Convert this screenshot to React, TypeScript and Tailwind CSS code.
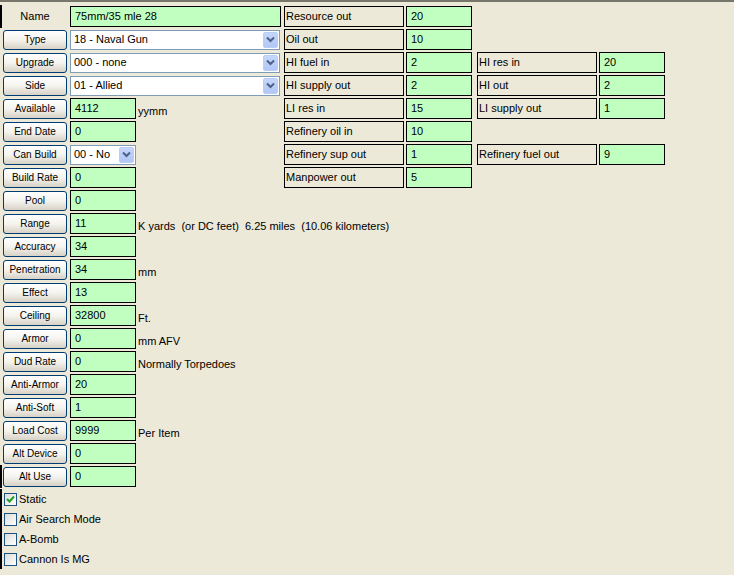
import React from "react";

const FONT = "font-['Tahoma','Liberation_Sans','DejaVu_Sans',sans-serif]";

interface FieldRow {
  label: string;
  value?: string;
  options?: string;
  unit?: string;
  small?: boolean;
  edge?: boolean;
}

const rows: FieldRow[] = [
  { label: "Type", options: "18 - Naval Gun" },
  { label: "Upgrade", options: "000 - none" },
  { label: "Side", options: "01 - Allied" },
  { label: "Available", value: "4112", unit: "yymm" },
  { label: "End Date", value: "0" },
  { label: "Can Build", options: "00 - No", small: true },
  { label: "Build Rate", value: "0" },
  { label: "Pool", value: "0" },
  { label: "Range", value: "11", unit: "K yards  (or DC feet)  6.25 miles  (10.06 kilometers)" },
  { label: "Accuracy", value: "34" },
  { label: "Penetration", value: "34", unit: "mm" },
  { label: "Effect", value: "13" },
  { label: "Ceiling", value: "32800", unit: "Ft." },
  { label: "Armor", value: "0", unit: "mm AFV" },
  { label: "Dud Rate", value: "0", unit: "Normally Torpedoes" },
  { label: "Anti-Armor", value: "20" },
  { label: "Anti-Soft", value: "1" },
  { label: "Load Cost", value: "9999", unit: "Per Item" },
  { label: "Alt Device", value: "0" },
  { label: "Alt Use", value: "0", edge: true },
];

const outputs: [string, string, string?, string?][] = [
  ["Resource out", "20"],
  ["Oil out", "10"],
  ["HI fuel in", "2", "HI res in", "20"],
  ["HI supply out", "2", "HI out", "2"],
  ["LI res in", "15", "LI supply out", "1"],
  ["Refinery oil in", "10"],
  ["Refinery sup out", "1", "Refinery fuel out", "9"],
  ["Manpower out", "5"],
];

const flags = [
  { label: "Static", checked: true },
  { label: "Air Search Mode", checked: false },
  { label: "A-Bomb", checked: false },
  { label: "Cannon Is MG", checked: false },
];

const XpButton = ({ label }: { label: string }) => (
  <button className="shrink-0 w-[64px] h-[20px] rounded-[3px] border border-[#003C74] bg-gradient-to-b from-white via-[#F4F3EE] to-[#D8D2C6] text-[10px] text-black leading-none">
    {label}
  </button>
);

const Chevron = () => (
  <svg width="9" height="7" viewBox="0 0 9 7">
    <path d="M1 1.5 L4.5 5 L8 1.5" fill="none" stroke="#4D6185" strokeWidth="2" />
  </svg>
);

const XpSelect = ({ text, small }: { text: string; small?: boolean }) => (
  <div className={`${small ? "w-[66px]" : "w-[210px]"} shrink-0 h-[20px] border border-[#7F9DB9] bg-white flex items-center justify-between pl-[3px] pr-[1px]`}>
    <span className="text-[11px] text-black">{text}</span>
    <div className="w-[15px] h-[16px] rounded-[2px] bg-gradient-to-b from-[#C6D6FC] to-[#B1C7F6] border border-[#B9CDF7] flex items-center justify-center">
      <Chevron />
    </div>
  </div>
);

const GreenBox = ({ value, wide }: { value: string; wide?: boolean }) => (
  <div className={`${wide ? "w-[211px]" : "w-[66px]"} shrink-0 h-[21px] border border-black bg-[#C0FFC0] px-[4px] pt-[3px] text-[11px] leading-[13px] text-black`}>
    {value}
  </div>
);

const Checkbox = ({ checked }: { checked: boolean }) => (
  <div className="shrink-0 w-[13px] h-[13px] border border-[#1C5180] bg-gradient-to-br from-[#DCDCD7] to-white flex items-center justify-center">
    {checked && (
      <svg width="9" height="9" viewBox="0 0 9 9">
        <path d="M1 4 L3.5 6.5 L8 1.5" fill="none" stroke="#21A121" strokeWidth="2" />
      </svg>
    )}
  </div>
);

export default function App() {
  return (
    <div className={`${FONT} w-[734px] min-h-[575px] bg-[#ECE9D8] border-t-2 border-[#77766B] flex text-black`}>
      <div className="w-[284px] shrink-0 pt-[3px] flex flex-col">
        <div className="h-[23px] flex items-center border-l-2 border-black pl-[1px] gap-[3px]">
          <div className="w-[64px] shrink-0 text-center text-[11px]">Name</div>
          <GreenBox value="75mm/35 mle 28" wide />
        </div>
        {rows.map((r) => (
          <div
            key={r.label}
            className={`h-[23px] flex items-center gap-[3px] ${r.edge ? "border-l-2 border-black pl-[1px]" : "pl-[3px]"}`}
          >
            <XpButton label={r.label} />
            {r.options ? <XpSelect text={r.options} small={r.small} /> : <GreenBox value={r.value ?? ""} />}
            {r.unit && <span className="shrink-0 text-[11px] whitespace-pre self-end mb-[1px] -ml-[1px]">{r.unit}</span>}
          </div>
        ))}
        <div className="flex flex-col pt-[1px]">
          {flags.map((f) => (
            <div key={f.label} className="h-[20px] flex items-center gap-[2px] border-l-2 border-black pl-[2px]">
              <Checkbox checked={f.checked} />
              <span className="text-[11px]">{f.label}</span>
            </div>
          ))}
        </div>
      </div>

      <div className="pt-[4px] flex flex-col gap-[2px]">
        {outputs.map(([l1, v1, l2, v2]) => (
          <div key={l1} className="flex">
            <div className="w-[120px] h-[21px] border border-black px-[1px] pt-[3px] text-[11px] leading-[13px]">{l1}</div>
            <div className="ml-[2px]">
              <GreenBox value={v1} />
            </div>
            {l2 && (
              <>
                <div className="ml-[5px] w-[120px] h-[21px] border border-black px-[1px] pt-[3px] text-[11px] leading-[13px]">{l2}</div>
                <div className="ml-[2px]">
                  <GreenBox value={v2 ?? ""} />
                </div>
              </>
            )}
          </div>
        ))}
      </div>
    </div>
  );
}
